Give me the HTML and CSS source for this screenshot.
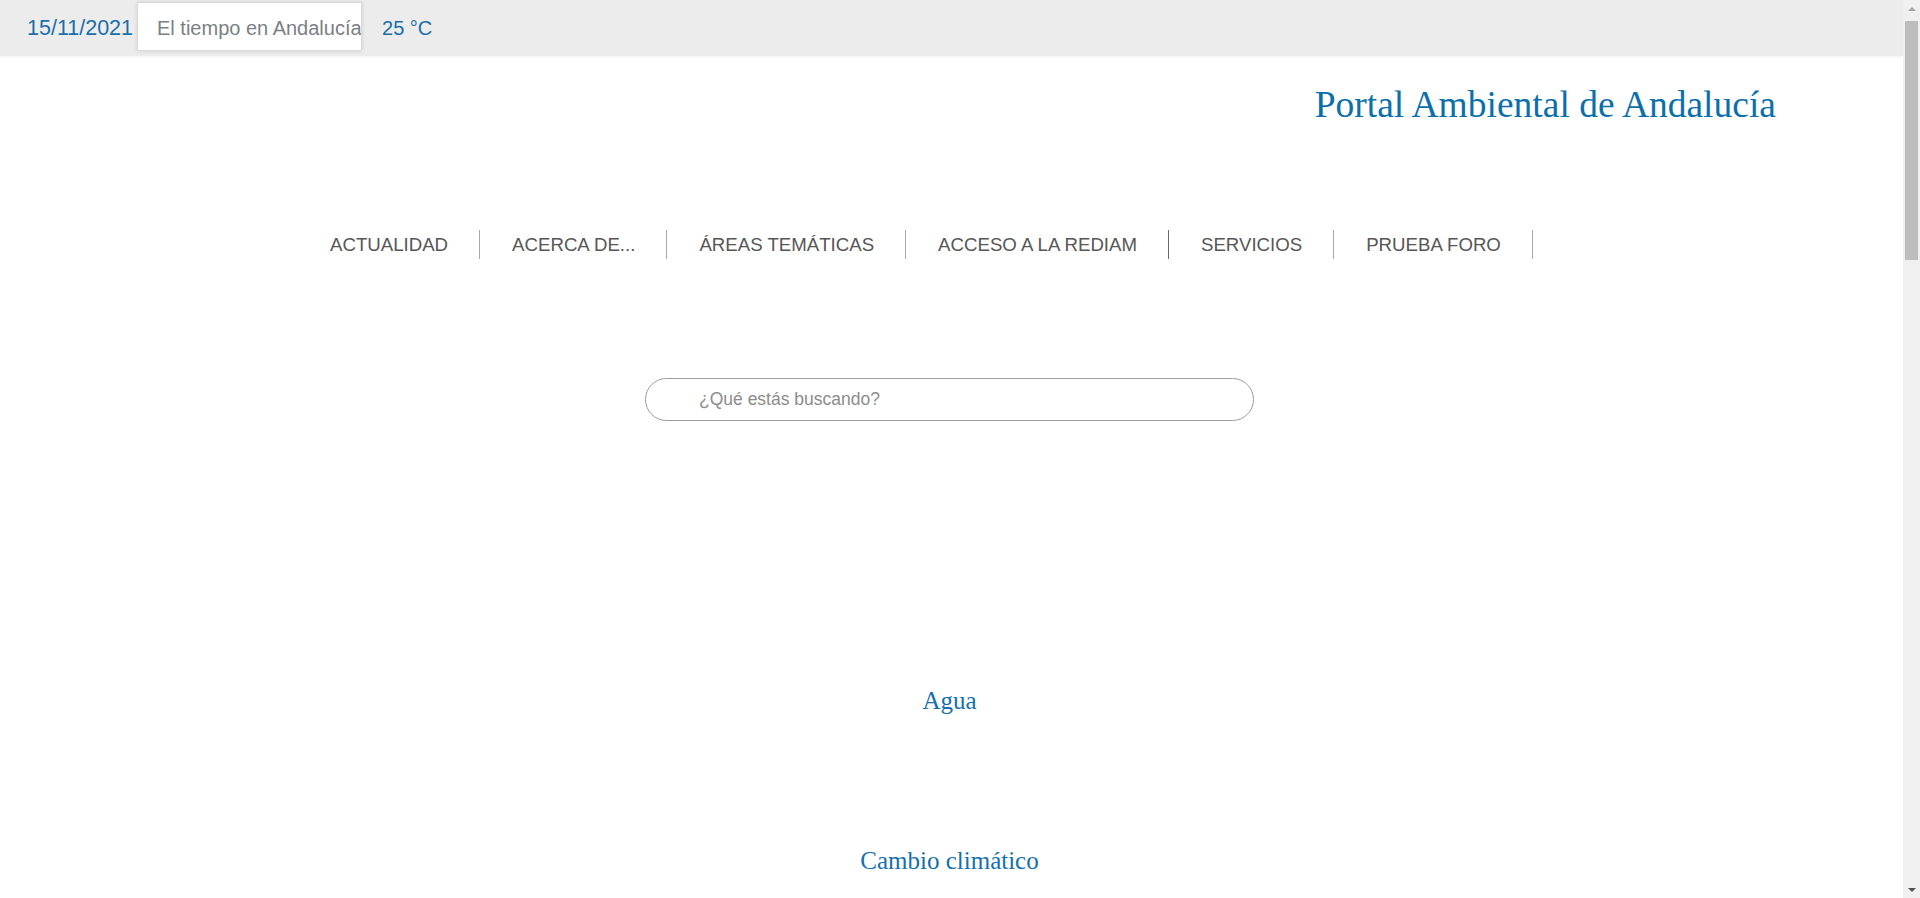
FILE: index.html
```html
<!DOCTYPE html>
<html lang="es">
<head>
<meta charset="utf-8">
<title>Portal Ambiental de Andalucía</title>
<link rel="stylesheet" href="styles.css">
</head>
<body>
<div class="page">
  <header class="topbar">
    <span class="date">15/11/2021</span>
    <div class="weather">El tiempo en Andalucía</div>
    <span class="temp">25 °C</span>
  </header>
  <div class="brand">
    <h1 class="site-title">Portal Ambiental de Andalucía</h1>
  </div>
  <nav class="mainnav">
    <a class="nav-item" href="#">ACTUALIDAD</a>
    <a class="nav-item" href="#">ACERCA DE...</a>
    <a class="nav-item" href="#">ÁREAS TEMÁTICAS</a>
    <a class="nav-item nav-item--active" href="#">ACCESO A LA REDIAM</a>
    <a class="nav-item" href="#">SERVICIOS</a>
    <a class="nav-item" href="#">PRUEBA FORO</a>
  </nav>
  <main class="content">
    <form class="search">
      <input class="search-input" type="text" placeholder="¿Qué estás buscando?">
    </form>
    <ul class="topics">
      <li class="topic"><a href="#">Agua</a></li>
      <li class="topic"><a href="#">Cambio climático</a></li>
    </ul>
  </main>
</div>
<div class="scrollbar" aria-hidden="true">
  <div class="sb-btn sb-up"><span class="sb-arrow-up"></span></div>
  <div class="sb-track"><div class="sb-thumb"></div></div>
  <div class="sb-btn sb-down"><span class="sb-arrow-down"></span></div>
</div>
</body>
</html>
```
FILE: styles.css
```css
html, body {
  margin: 0;
  padding: 0;
  background: #ffffff;
}

body {
  font-family: "Liberation Sans", Arial, sans-serif;
  overflow: hidden;
}

.page {
  margin-right: 17px;
  height: 898px;
}

.topbar {
  display: flex;
  align-items: flex-start;
  height: 56px;
  padding-left: 27px;
  background: #ececec;
  box-shadow: 0 1px 3px rgba(0, 0, 0, 0.06);
  position: relative;
  z-index: 1;
}

.date {
  font-size: 21.5px;
  line-height: 57px;
  color: #1a6ea9;
}

.weather {
  box-sizing: border-box;
  width: 225px;
  height: 49px;
  margin: 2px 0 0 4px;
  padding-left: 19px;
  background: #ffffff;
  border: 1px solid #dadada;
  box-shadow: 0 0 4px rgba(0, 0, 0, 0.12);
  font-size: 20px;
  line-height: 50px;
  color: #7a7f85;
  white-space: nowrap;
  overflow: hidden;
}

.temp {
  margin-left: 20px;
  font-size: 20px;
  line-height: 57px;
  color: #1a6ea9;
}

.brand {
  padding: 27px 127px 0 0;
  text-align: right;
}

.site-title {
  margin: 0;
  font-family: "Liberation Serif", "Times New Roman", serif;
  font-weight: normal;
  font-size: 37.5px;
  line-height: 44px;
  color: #0b6fab;
}

.mainnav {
  display: flex;
  margin-top: 103px;
  padding-left: 298px;
}

.nav-item {
  display: flex;
  align-items: center;
  height: 29px;
  padding: 0 31px 0 32px;
  border-right: 1px solid #a9a9a9;
  font-size: 18.65px;
  color: #565656;
  text-decoration: none;
  white-space: nowrap;
}

.nav-item--active {
  border-right-color: #6a6a6a;
}

.content {
  padding-right: 4px;
}

.search {
  width: 609px;
  margin: 119px auto 0;
}

.search-input {
  box-sizing: border-box;
  display: block;
  width: 100%;
  height: 43px;
  padding: 0 0 0 53px;
  border: 1px solid #9c9c9c;
  border-radius: 22px;
  outline: none;
  background: #ffffff;
  font-family: "Liberation Sans", Arial, sans-serif;
  font-size: 17.5px;
  color: #555;
}

.search-input::placeholder {
  color: #8c8c8c;
}

.topics {
  list-style: none;
  margin: 266px 0 0;
  padding: 0;
}

.topic {
  height: 160px;
  text-align: center;
  font-family: "Liberation Serif", "Times New Roman", serif;
  font-size: 25px;
  line-height: 28px;
}

.topic:last-child {
  height: auto;
}

.topic a {
  color: #1470ad;
  text-decoration: none;
}

/* simulated browser scrollbar, overlaying the right edge */
.scrollbar {
  position: fixed;
  top: 0;
  right: 0;
  width: 17px;
  height: 100vh;
  display: flex;
  flex-direction: column;
  background: #f0f0f0;
  z-index: 10;
}

.sb-btn {
  height: 17px;
  display: flex;
  align-items: center;
  justify-content: center;
  flex: none;
}

.sb-track {
  flex: 1;
  padding: 4px 2px 0;
}

.sb-thumb {
  height: 239px;
  background: #bdbdbd;
}

.sb-arrow-up {
  width: 0;
  height: 0;
  border-left: 4px solid transparent;
  border-right: 4px solid transparent;
  border-bottom: 4px solid #a3a3a3;
}

.sb-arrow-down {
  width: 0;
  height: 0;
  border-left: 4px solid transparent;
  border-right: 4px solid transparent;
  border-top: 4px solid #505050;
}
```
